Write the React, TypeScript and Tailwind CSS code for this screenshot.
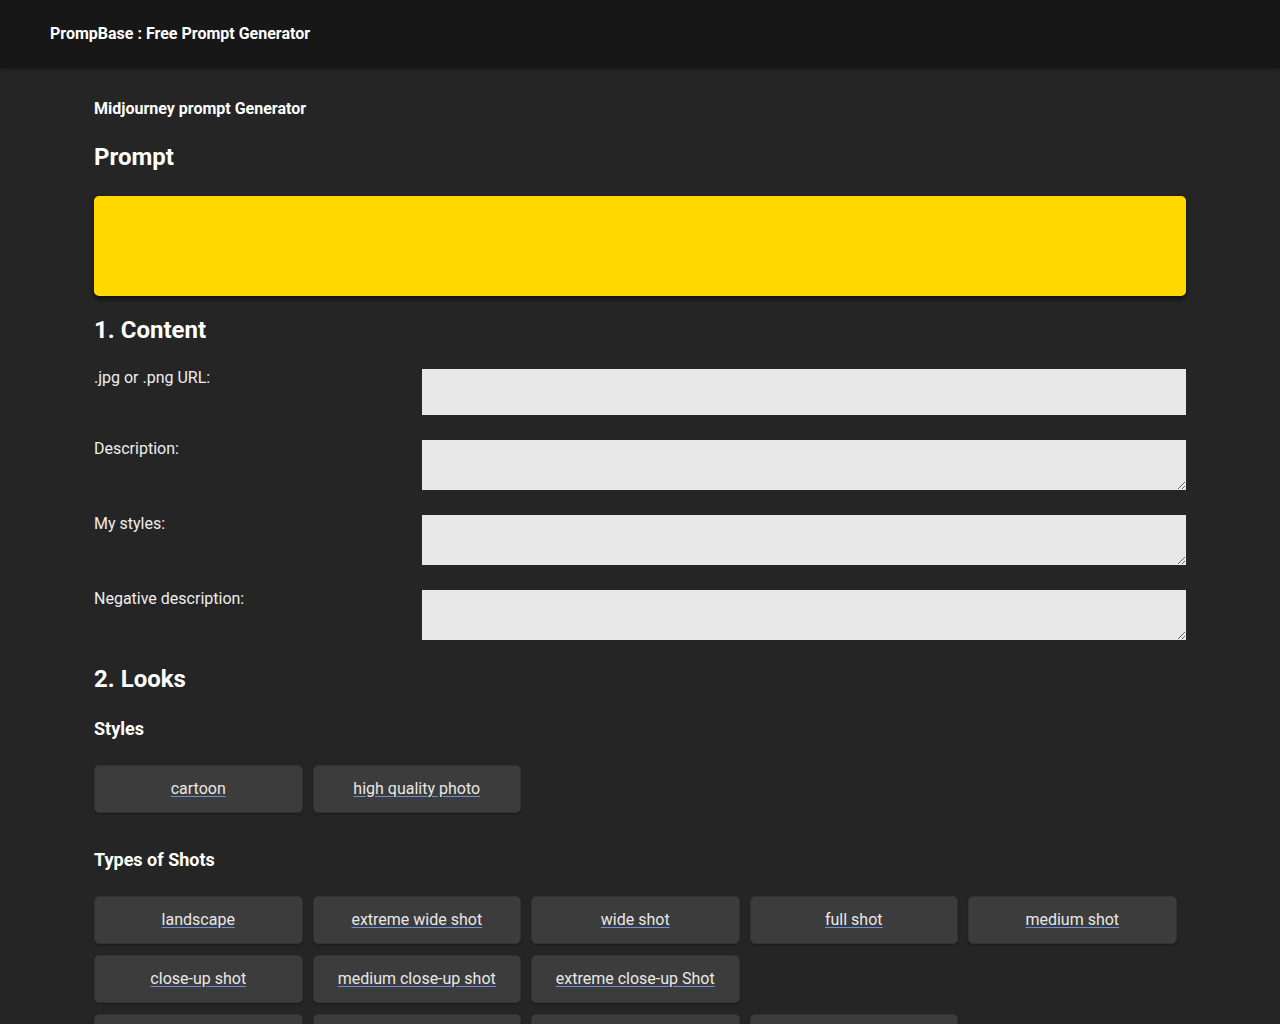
import React from "react";

const Btn = ({ t, first }: { t: string; first?: boolean }) => (
  <button className={`h-[48px] rounded-[5px] bg-[#3c3c3c] border border-[#333] text-[16px] text-[#e8e8e8] underline decoration-[#6b8fd6] underline-offset-2 shadow-[0_1px_2px_rgba(0,0,0,0.3)] ${first ? "col-start-1" : ""}`}>
    {t}
  </button>
);

const Row = ({ label, area, h }: { label: string; area?: boolean; h: number }) => (
  <div className="flex mb-[25px]">
    <div className="w-[328px] text-[16px] text-[#eee] leading-[19px] -mt-[1px]">{label}</div>
    {area ? (
      <textarea className="w-[764px] bg-[#e8e8e8] block outline-none" style={{ height: h }} />
    ) : (
      <input className="w-[764px] bg-[#e8e8e8] block outline-none" style={{ height: h }} />
    )}
  </div>
);

export default function App() {
  const row1 = ["landscape", "extreme wide shot", "wide shot", "full shot", "medium shot"];
  const row2 = ["close-up shot", "medium close-up shot", "extreme close-up Shot"];
  const row3 = ["over the shoulder shot", "point of view shot", "low angle shot", "high angle shot"];
  return (
    <div className="min-h-[1024px] bg-[#252525] text-white" style={{ fontFamily: "Roboto, sans-serif" }}>
      <div className="h-[68px] bg-[#171717] flex items-center px-[50px] shadow-[0_1px_3px_rgba(0,0,0,0.4)]">
        <span className="text-[16px] font-bold">PrompBase : Free Prompt Generator</span>
      </div>
      <div className="w-[1092px] mx-auto pt-[31px]">
        <div className="text-[16px] font-bold leading-[19px]">Midjourney prompt Generator</div>
        <div className="text-[24px] font-bold mt-[25px] leading-[28px]">Prompt</div>
        <div className="h-[100px] bg-[#ffd800] rounded-[5px] mt-[25px] shadow-[0_3px_5px_rgba(0,0,0,0.6)]" />
        <div className="text-[24px] font-bold mt-[20px] leading-[28px]">1. Content</div>
        <div className="mt-[25px]">
          <Row label=".jpg or .png URL:" h={46} />
          <Row label="Description:" area h={50} />
          <Row label="My styles:" area h={50} />
          <Row label="Negative description:" area h={50} />
        </div>
        <div className="text-[24px] font-bold mt-[14px] leading-[28px]">2. Looks</div>
        <div className="text-[18px] font-bold mt-[25px] leading-[21px]">Styles</div>
        <div className="grid grid-cols-[repeat(5,208.5px)] gap-[10px] mt-[26px]">
          <Btn t="cartoon" />
          <Btn t="high quality photo" />
        </div>
        <div className="text-[18px] font-bold mt-[36px] leading-[21px]">Types of Shots</div>
        <div className="grid grid-cols-[repeat(5,208.5px)] gap-y-[11px] gap-x-[10px] mt-[26px]">
          {row1.map((s) => <Btn key={s} t={s} />)}
          {row2.map((s, i) => <Btn key={s} t={s} first={i === 0} />)}
          {row3.map((s, i) => <Btn key={s} t={s} first={i === 0} />)}
        </div>
      </div>
    </div>
  );
}
